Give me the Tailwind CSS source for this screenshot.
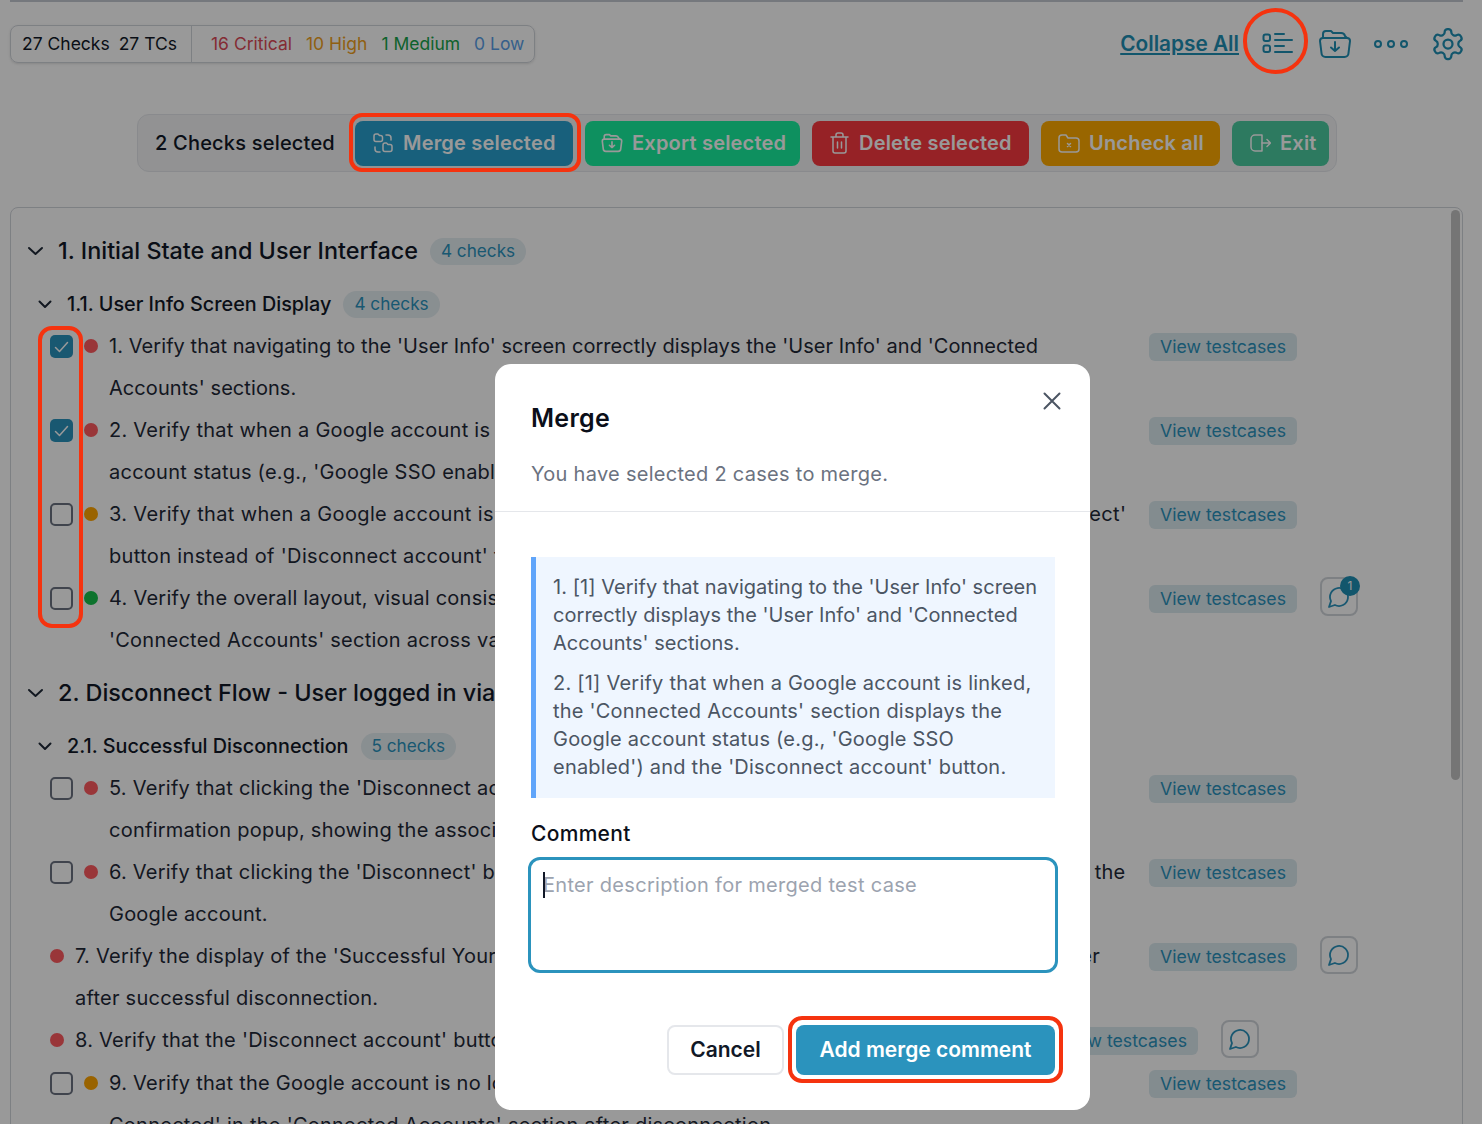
<!DOCTYPE html>
<html lang="en">
<head>
    <meta charset="UTF-8">
    <title>Checks</title>
    <script src="https://cdn.jsdelivr.net/npm/@tailwindcss/browser@4"></script>
</head>
<body class="bg-white font-['Inter','Noto_Sans',sans-serif] text-[#1f2937]">
<div class="relative w-[1482px] h-[1124px] overflow-hidden">
    <div class="mx-[10px] w-[1453px] h-[2px] bg-[#c4c8d0]"></div>

    <!-- top bar -->
    <div class="flex items-center justify-between pl-[10px] pr-[16px] mt-[23px] h-[38px]">
        <div class="flex h-[38px] items-center rounded-lg border border-[#d1d5db] shadow-sm text-[17.5px] w-[525px]">
            <div class="flex items-center gap-[9px] pl-[11px] w-[181px] h-full border-r border-[#d1d5db] text-[#111827]">
                <span>27 Checks</span><span>27 TCs</span>
            </div>
            <div class="flex items-center gap-[14px] pl-[19px]">
                <span class="text-[#dc4a57]">16 Critical</span>
                <span class="text-[#f0a020]">10 High</span>
                <span class="text-[#16a34a]">1 Medium</span>
                <span class="text-[#5b9fe8]">0 Low</span>
            </div>
        </div>
        <div class="flex items-center text-[#1f8fb5]">
            <a class="text-[20.800px] font-semibold underline mr-[23px]">Collapse All</a>
            <svg class="w-[34px] h-[34px] mr-[22px]" viewBox="0 0 34 34" fill="none" stroke="currentColor" stroke-width="2" stroke-linecap="round"><rect x="1.500" y="7.500" width="6.500" height="6.500" rx="2"/><rect x="1.500" y="18.500" width="6.500" height="6.500" rx="2"/><path d="M13 7h9M13 13h17M13 19h9M13 25h17"/></svg>
            <svg class="w-[34px] h-[34px] mr-[22px]" viewBox="0 0 34 34" fill="none" stroke="currentColor" stroke-width="2" stroke-linecap="round" stroke-linejoin="round"><path d="M5 11V7a3 3 0 0 1 3-3h5l2 2h8a4 4 0 0 1 4 3l2 2"/><path d="M2 14c0-2 1-3 3-3h24c2 0 3 1 3 3l-1.500 12a4 4 0 0 1-4 4h-19a4 4 0 0 1-4-4z"/><path d="M17 15v9M13 20.500l4 3.500 4-3.500"/></svg>
            <svg class="w-[34px] h-[14px] mr-[22px]" viewBox="0 0 34 14" fill="none" stroke="currentColor" stroke-width="2"><circle cx="4" cy="7" r="3"/><circle cx="17" cy="7" r="3"/><circle cx="30" cy="7" r="3"/></svg>
            <svg class="w-[36px] h-[36px]" viewBox="0 0 24 24" fill="none" stroke="currentColor" stroke-width="1.500" stroke-linecap="round" stroke-linejoin="round"><path d="M12.220 2h-.44a2 2 0 0 0-2 2v.18a2 2 0 0 1-1 1.730l-.43.25a2 2 0 0 1-2 0l-.15-.08a2 2 0 0 0-2.730.73l-.22.38a2 2 0 0 0 .73 2.730l.15.1a2 2 0 0 1 1 1.720v.51a2 2 0 0 1-1 1.740l-.15.09a2 2 0 0 0-.73 2.730l.22.38a2 2 0 0 0 2.730.73l.15-.08a2 2 0 0 1 2 0l.43.25a2 2 0 0 1 1 1.730V20a2 2 0 0 0 2 2h.44a2 2 0 0 0 2-2v-.18a2 2 0 0 1 1-1.730l.43-.25a2 2 0 0 1 2 0l.15.08a2 2 0 0 0 2.730-.73l.22-.39a2 2 0 0 0-.73-2.730l-.15-.08a2 2 0 0 1-1-1.740v-.5a2 2 0 0 1 1-1.740l.15-.09a2 2 0 0 0 .73-2.730l-.22-.38a2 2 0 0 0-2.730-.73l-.15.08a2 2 0 0 1-2 0l-.43-.25a2 2 0 0 1-1-1.730V4a2 2 0 0 0-2-2z"/><circle cx="12" cy="12" r="3"/></svg>
        </div>
    </div>

    <!-- selection bar -->
    <div class="pl-[137px] mt-[51px]">
        <div class="flex items-center w-[1200px] h-[58px] rounded-xl border border-[#e5e7eb] bg-[#f3f4f6] pl-[17px] text-white text-[20px] font-semibold tracking-[0.2px]">
            <span class="text-[#111827] font-medium w-[200px]">2 Checks selected</span>
            <button class="flex items-center gap-[9px] h-[45px] w-[218px] pl-[17px] rounded-lg bg-[#28a0cf]">
                <svg class="w-[22px] h-[22px]" viewBox="0 0 22 22" fill="none" stroke="currentColor" stroke-width="1.500" stroke-linecap="round" stroke-linejoin="round"><path d="M2 4a2 2 0 0 1 2-2h2l1.500 1.500h1a2 2 0 0 1 2 2v2a2 2 0 0 1-2 2H4a2 2 0 0 1-2-2z"/><path d="M11 13a2 2 0 0 1 2-2h1.500l1.500 1.500h2a2 2 0 0 1 2 2v3a2 2 0 0 1-2 2h-5a2 2 0 0 1-2-2z"/><path d="M14 3h2a3 3 0 0 1 3 3v2M8 20H6a3 3 0 0 1-3-3v-2"/></svg>
                Merge selected
            </button>
            <button class="flex items-center gap-[9px] h-[45px] w-[215px] ml-[12px] pl-[16px] rounded-lg bg-[#18f09e]">
                <svg class="w-[22px] h-[22px]" viewBox="0 0 34 34" fill="none" stroke="currentColor" stroke-width="2.500" stroke-linecap="round" stroke-linejoin="round"><path d="M5 11V7a3 3 0 0 1 3-3h5l2 2h8a4 4 0 0 1 4 3l2 2"/><path d="M2 14c0-2 1-3 3-3h24c2 0 3 1 3 3l-1.500 12a4 4 0 0 1-4 4h-19a4 4 0 0 1-4-4z"/><path d="M17 15v9M13 20.500l4 3.500 4-3.500"/></svg>
                Export selected
            </button>
            <button class="flex items-center gap-[9px] h-[45px] w-[217px] ml-[12px] pl-[17px] rounded-lg bg-[#fa3a40]">
                <svg class="w-[21px] h-[22px]" viewBox="0 0 21 22" fill="none" stroke="currentColor" stroke-width="1.500" stroke-linecap="round" stroke-linejoin="round"><path d="M2 5h17M7 5V3a2 2 0 0 1 2-2h3a2 2 0 0 1 2 2v2M4 5v14a2 2 0 0 0 2 2h9a2 2 0 0 0 2-2V5M8.500 10v6M12.500 10v6"/></svg>
                Delete selected
            </button>
            <button class="flex items-center gap-[9px] h-[45px] w-[179px] ml-[12px] pl-[17px] rounded-lg bg-[#ffab00]">
                <svg class="w-[22px] h-[22px]" viewBox="0 0 22 22" fill="none" stroke="currentColor" stroke-width="1.500" stroke-linecap="round" stroke-linejoin="round"><path d="M1 6a3 3 0 0 1 3-3h4l2 3h8a3 3 0 0 1 3 3v8a3 3 0 0 1-3 3H4a3 3 0 0 1-3-3z"/><path d="M9.500 11.500l3 3M12.500 11.500l-3 3"/></svg>
                Uncheck all
            </button>
            <button class="flex items-center gap-[9px] h-[45px] w-[97px] ml-[12px] pl-[17px] rounded-lg bg-[#4bcba0]">
                <svg class="w-[22px] h-[22px]" viewBox="0 0 22 22" fill="none" stroke="currentColor" stroke-width="1.500" stroke-linecap="round" stroke-linejoin="round"><path d="M13 3H6a4 4 0 0 0-4 4v8a4 4 0 0 0 4 4h7z"/><path d="M13 11h8M18 7.500l3.500 3.500-3.500 3.500"/></svg>
                Exit
            </button>
        </div>
    </div>

    <!-- checklist panel -->
    <div class="relative mx-[10px] mt-[35px] w-[1453px] h-[1000px] rounded-lg border border-[#d1d5db] pt-[23px]">
        <div class="absolute right-[2px] top-[2px] w-[9px] h-[570px] rounded-full bg-[#c4c4c4]"></div>

        <div class="flex items-center h-[40px] pl-[16px]">
            <svg class="w-[17px] h-[10px]" viewBox="0 0 17 10" fill="none" stroke="currentColor" stroke-width="2" stroke-linecap="round" stroke-linejoin="round"><path d="M2 2l6.500 6L15 2"/></svg>
            <h2 class="ml-[14px] text-[23.400px] font-medium text-[#111827]">1. Initial State and User Interface</h2>
            <span class="ml-[12px] flex items-center h-[27px] px-[11px] rounded-full bg-[#e5eef2] text-[17.200px] text-[#2b93bd]">4 checks</span>
        </div>
        <div class="flex items-center h-[34px] mt-[16px] pl-[27px]">
            <svg class="w-[14px] h-[9px]" viewBox="0 0 14 9" fill="none" stroke="currentColor" stroke-width="2" stroke-linecap="round" stroke-linejoin="round"><path d="M1.500 1.500L7 7l5.500-5.500"/></svg>
            <h3 class="ml-[15px] mt-[1px] text-[19.800px] font-medium text-[#111827]">1.1. User Info Screen Display</h3>
            <span class="ml-[12px] flex items-center h-[27px] px-[11px] rounded-full bg-[#e5eef2] text-[17.200px] text-[#2b93bd]">4 checks</span>
        </div>

        <div class="mt-[4px] text-[20px] leading-[42px] tracking-[0.25px]">
            <div class="flex pl-[39px]">
                <span class="flex items-center justify-center w-[23px] h-[23px] mt-[10px] rounded-[5px] bg-[#2b93bd]"><svg class="w-[15px] h-[12px]" viewBox="0 0 15 12" fill="none" stroke="white" stroke-width="1.500" stroke-linecap="round" stroke-linejoin="round"><path d="M1.500 6.500l4 4 8-9"/></svg></span>
                <span class="w-[14px] h-[14px] mt-[14px] ml-[11px] rounded-full bg-[#ff5a60]"></span>
                <p class="w-[1040px] ml-[11px] whitespace-nowrap tracking-[0.07px]">1. Verify that navigating to the 'User Info' screen correctly displays the 'User Info' and 'Connected<br>Accounts' sections.</p>
                <a class="flex items-center justify-center w-[148px] h-[28px] mt-[8px] rounded-md bg-[#dbe9ef] text-[17.700px] tracking-normal text-[#2b93bd]">View testcases</a>
            </div>
            <div class="flex pl-[39px]">
                <span class="flex items-center justify-center w-[23px] h-[23px] mt-[10px] rounded-[5px] bg-[#2b93bd]"><svg class="w-[15px] h-[12px]" viewBox="0 0 15 12" fill="none" stroke="white" stroke-width="1.500" stroke-linecap="round" stroke-linejoin="round"><path d="M1.500 6.500l4 4 8-9"/></svg></span>
                <span class="w-[14px] h-[14px] mt-[14px] ml-[11px] rounded-full bg-[#ff5a60]"></span>
                <p class="w-[1040px] ml-[11px] whitespace-nowrap">2. Verify that when a Google account is linked, the 'Connected Accounts' section displays the<br>account status (e.g., 'Google SSO enabled') and the 'Disconnect account' button.</p>
                <a class="flex items-center justify-center w-[148px] h-[28px] mt-[8px] rounded-md bg-[#dbe9ef] text-[17.700px] tracking-normal text-[#2b93bd]">View testcases</a>
            </div>
            <div class="flex pl-[39px]">
                <span class="w-[23px] h-[23px] mt-[10px] rounded-[5px] border-2 border-[#6b7280]"></span>
                <span class="w-[14px] h-[14px] mt-[14px] ml-[11px] rounded-full bg-[#ffa500]"></span>
                <p class="w-[1040px] ml-[11px] whitespace-nowrap tracking-[0.35px]">3. Verify that when a Google account is not linked, the 'Connected Accounts' section displays 'Connect'<br>button instead of 'Disconnect account' for that provider.</p>
                <a class="flex items-center justify-center w-[148px] h-[28px] mt-[8px] rounded-md bg-[#dbe9ef] text-[17.700px] tracking-normal text-[#2b93bd]">View testcases</a>
            </div>
            <div class="flex pl-[39px]">
                <span class="w-[23px] h-[23px] mt-[10px] rounded-[5px] border-2 border-[#6b7280]"></span>
                <span class="w-[14px] h-[14px] mt-[14px] ml-[11px] rounded-full bg-[#16c04c]"></span>
                <p class="w-[1040px] ml-[11px] whitespace-nowrap">4. Verify the overall layout, visual consistency and alignment of the 'User Info' and<br>'Connected Accounts' section across various screen sizes.</p>
                <a class="flex items-center justify-center w-[148px] h-[28px] mt-[8px] rounded-md bg-[#dbe9ef] text-[17.700px] tracking-normal text-[#2b93bd]">View testcases</a>
                <span class="relative flex items-center justify-center w-[38px] h-[39px] ml-[23px] rounded-lg border-2 border-[#d1d5db] text-[#2b93bd]">
                    <svg class="w-[24px] h-[24px]" viewBox="0 0 24 24" fill="none" stroke="currentColor" stroke-width="1.800" stroke-linecap="round" stroke-linejoin="round"><path d="M7.900 20A9 9 0 1 0 4 16.100L2 22Z"/></svg>
                    <span class="absolute top-[-3px] right-[-4px] flex items-center justify-center w-[20px] h-[20px] rounded-full bg-[#1f8fb5] text-[12px] leading-none text-white">1</span>
                </span>
            </div>
        </div>

        <div class="flex items-center h-[40px] mt-[12px] pl-[16px]">
            <svg class="w-[17px] h-[10px]" viewBox="0 0 17 10" fill="none" stroke="currentColor" stroke-width="2" stroke-linecap="round" stroke-linejoin="round"><path d="M2 2l6.500 6L15 2"/></svg>
            <h2 class="ml-[14px] text-[23.400px] font-medium text-[#111827]">2. Disconnect Flow - User logged in via Email and Password</h2>
        </div>
        <div class="flex items-center h-[34px] mt-[16px] pl-[27px]">
            <svg class="w-[14px] h-[9px]" viewBox="0 0 14 9" fill="none" stroke="currentColor" stroke-width="2" stroke-linecap="round" stroke-linejoin="round"><path d="M1.500 1.500L7 7l5.500-5.500"/></svg>
            <h3 class="ml-[15px] mt-[1px] text-[19.800px] font-medium text-[#111827]">2.1. Successful Disconnection</h3>
            <span class="ml-[12px] flex items-center h-[27px] px-[11px] rounded-full bg-[#e5eef2] text-[17.200px] text-[#2b93bd]">5 checks</span>
        </div>

        <div class="mt-[4px] text-[20px] leading-[42px] tracking-[0.25px]">
            <div class="flex pl-[39px]">
                <span class="w-[23px] h-[23px] mt-[10px] rounded-[5px] border-2 border-[#6b7280]"></span>
                <span class="w-[14px] h-[14px] mt-[14px] ml-[11px] rounded-full bg-[#ff5a60]"></span>
                <p class="w-[1040px] ml-[11px] whitespace-nowrap">5. Verify that clicking the 'Disconnect account' button for a linked Google account triggers a<br>confirmation popup, showing the associated email.</p>
                <a class="flex items-center justify-center w-[148px] h-[28px] mt-[8px] rounded-md bg-[#dbe9ef] text-[17.700px] tracking-normal text-[#2b93bd]">View testcases</a>
            </div>
            <div class="flex pl-[39px]">
                <span class="w-[23px] h-[23px] mt-[10px] rounded-[5px] border-2 border-[#6b7280]"></span>
                <span class="w-[14px] h-[14px] mt-[14px] ml-[11px] rounded-full bg-[#ff5a60]"></span>
                <p class="w-[1040px] ml-[11px] whitespace-nowrap tracking-[0.23px]">6. Verify that clicking the 'Disconnect' button in the confirmation popup dialogue successfully unlinks the<br>Google account.</p>
                <a class="flex items-center justify-center w-[148px] h-[28px] mt-[8px] rounded-md bg-[#dbe9ef] text-[17.700px] tracking-normal text-[#2b93bd]">View testcases</a>
            </div>
            <div class="flex pl-[39px]">
                <span class="w-[14px] h-[14px] mt-[14px] rounded-full bg-[#ff5a60]"></span>
                <p class="w-[1074px] ml-[11px] whitespace-nowrap tracking-[0.25px]">7. Verify the display of the 'Successful Your Google account has been disconnected' banner in the header<br>after successful disconnection.</p>
                <a class="flex items-center justify-center w-[148px] h-[28px] mt-[8px] rounded-md bg-[#dbe9ef] text-[17.700px] tracking-normal text-[#2b93bd]">View testcases</a>
                <span class="flex items-center justify-center w-[38px] h-[38px] mt-[1px] ml-[23px] rounded-lg border-2 border-[#d1d5db] text-[#2b93bd]">
                    <svg class="w-[24px] h-[24px]" viewBox="0 0 24 24" fill="none" stroke="currentColor" stroke-width="1.800" stroke-linecap="round" stroke-linejoin="round"><path d="M7.900 20A9 9 0 1 0 4 16.100L2 22Z"/></svg>
                </span>
            </div>
            <div class="flex pl-[39px]">
                <span class="w-[14px] h-[14px] mt-[14px] rounded-full bg-[#ff5a60]"></span>
                <p class="w-[975px] ml-[11px] whitespace-nowrap">8. Verify that the 'Disconnect account' button is removed from the screen</p>
                <a class="flex items-center justify-center w-[148px] h-[28px] mt-[8px] rounded-md bg-[#dbe9ef] text-[17.700px] tracking-normal text-[#2b93bd]">View testcases</a>
                <span class="flex items-center justify-center w-[38px] h-[38px] mt-[1px] ml-[23px] rounded-lg border-2 border-[#d1d5db] text-[#2b93bd]">
                    <svg class="w-[24px] h-[24px]" viewBox="0 0 24 24" fill="none" stroke="currentColor" stroke-width="1.800" stroke-linecap="round" stroke-linejoin="round"><path d="M7.900 20A9 9 0 1 0 4 16.100L2 22Z"/></svg>
                </span>
            </div>
            <div class="flex pl-[39px] mt-[1px]">
                <span class="w-[23px] h-[23px] mt-[10px] rounded-[5px] border-2 border-[#6b7280]"></span>
                <span class="w-[14px] h-[14px] mt-[14px] ml-[11px] rounded-full bg-[#ffa500]"></span>
                <p class="w-[1040px] ml-[11px] whitespace-nowrap">9. Verify that the Google account is no longer shown as<br>Connected' in the 'Connected Accounts' section after disconnection.</p>
                <a class="flex items-center justify-center w-[148px] h-[28px] mt-[8px] rounded-md bg-[#dbe9ef] text-[17.700px] tracking-normal text-[#2b93bd]">View testcases</a>
            </div>
        </div>
    </div>

    <!-- backdrop -->
    <div class="absolute inset-0 bg-black/40"></div>

    <!-- merge dialog -->
    <div class="absolute left-[495px] top-[364px] w-[595px] h-[746px] rounded-2xl bg-white">
        <button class="absolute right-[28px] top-[27px] text-[#4b5563]">
            <svg class="w-[20px] h-[20px]" viewBox="0 0 20 20" fill="none" stroke="currentColor" stroke-width="2" stroke-linecap="round"><path d="M2.500 2.500l15 15M17.500 2.500l-15 15"/></svg>
        </button>
        <div class="pl-[36px] pr-[35px] pt-[36px] h-[148px] border-b border-[#e5e7eb]">
            <h2 class="text-[25px] leading-[36px] font-semibold text-[#0b0f19] tracking-[0.3px]">Merge</h2>
            <p class="mt-[24px] text-[20px] leading-[28px] text-[#6b7280] tracking-[0.28px]">You have selected 2 cases to merge.</p>
        </div>
        <div class="pl-[36px] pr-[35px] pt-[45px]">
            <div class="w-[524px] h-[241px] border-l-[5px] border-[#60a5fa] bg-[#eff6ff] pl-[17px] pt-[16px] text-[20px] leading-[28px] text-[#4b5563] whitespace-nowrap">
                <p class="tracking-[0.04px]">1. [1] Verify that navigating to the 'User Info' screen<br>correctly displays the 'User Info' and 'Connected<br>Accounts' sections.</p>
                <p class="mt-[12px] tracking-[0.22px]">2. [1] Verify that when a Google account is linked,<br>the 'Connected Accounts' section displays the<br>Google account status (e.g., 'Google SSO<br>enabled') and the 'Disconnect account' button.</p>
            </div>
            <label class="block mt-[22px] text-[21px] leading-[28px] font-medium text-[#0b0f19] tracking-[0.3px]">Comment</label>
            <div class="-ml-[3px] mt-[9px] w-[530px] h-[116px] rounded-xl border-[3px] border-[#2b93bd] pl-[12px] pt-[11px] text-[20px] leading-[28px] text-[#9ca3af] tracking-[0.3px]">
                <span class="relative">Enter description for merged test case<span class="absolute left-0 top-[-1px] w-[1.500px] h-[26px] bg-[#111827]"></span></span>
            </div>
            <div class="flex justify-end gap-[12px] mt-[52px] text-[21px] font-semibold">
                <button class="w-[117px] h-[50px] rounded-lg border-2 border-[#e5e7eb] text-[#111827]">Cancel</button>
                <button class="w-[259px] h-[50px] rounded-lg bg-[#2b93bd] text-white">Add merge comment</button>
            </div>
        </div>
    </div>

    <!-- red annotations on the screenshot -->
    <div class="absolute left-[349px] top-[113px] w-[232px] h-[59px] rounded-[13px] border-4 border-[#f5330f]"></div>
    <div class="absolute left-[38px] top-[326px] w-[45px] h-[302px] rounded-[14px] border-4 border-[#f5330f]"></div>
    <div class="absolute left-[1243px] top-[8px] w-[65px] h-[66px] rounded-full border-4 border-[#f5330f]"></div>
    <div class="absolute left-[788px] top-[1016px] w-[275px] h-[67px] rounded-[14px] border-4 border-[#f5330f]"></div>
</div>
</body>
</html>
